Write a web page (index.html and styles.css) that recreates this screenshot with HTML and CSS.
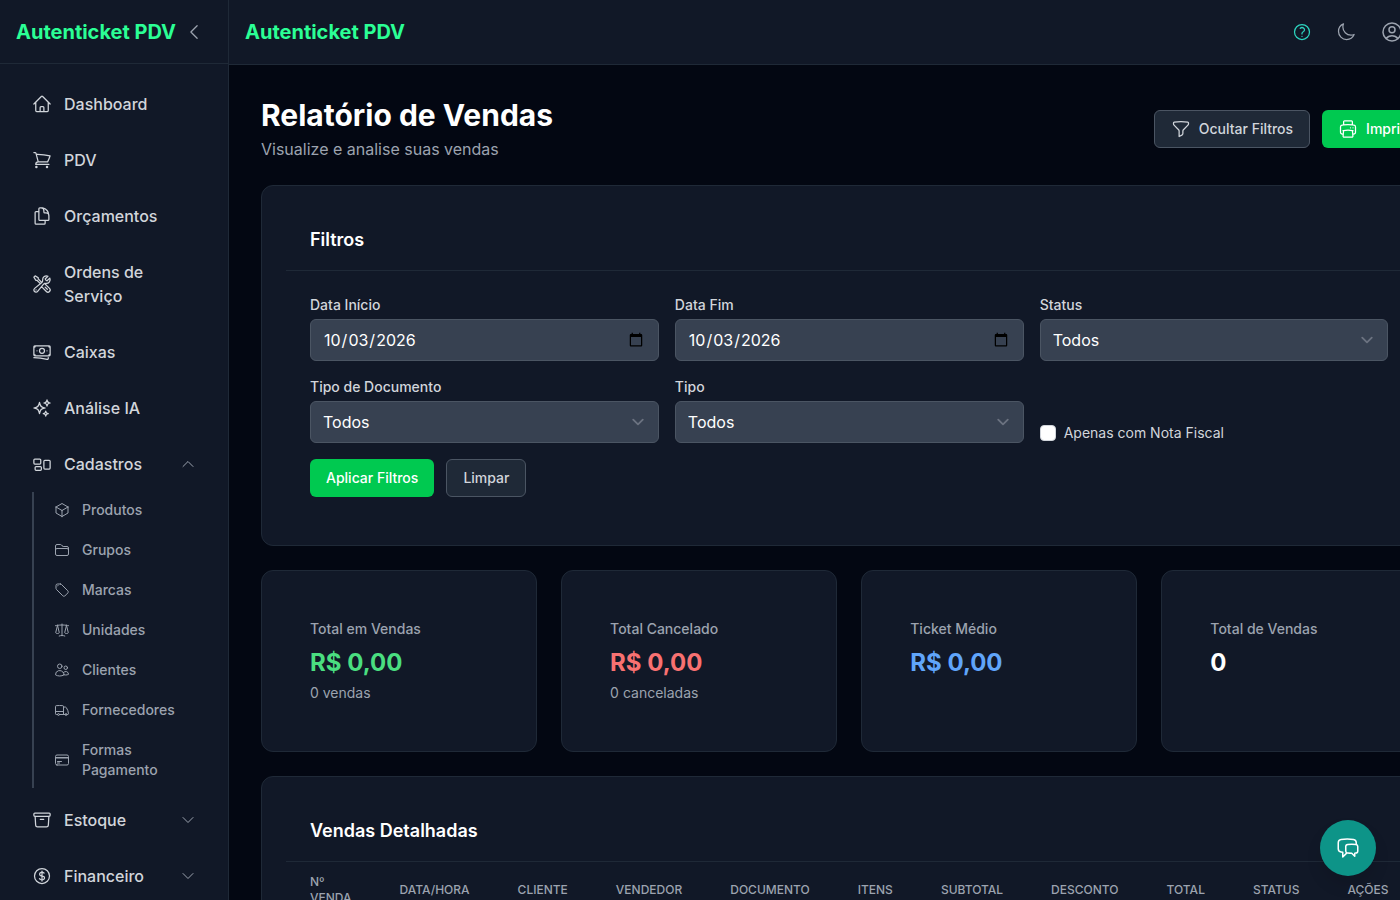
FILE: index.html
```
<!DOCTYPE html>
<html lang="pt-BR">
<head>
    <meta charset="UTF-8">
    <meta name="viewport" content="width=device-width, initial-scale=1.0">
    <title>Relatório de Vendas - Autenticket PDV</title>
    <link rel="stylesheet" href="styles.css">
</head>
<body>
    <!-- Icons -->
    <svg class="sprite" aria-hidden="true">
        <symbol id="chevron-left" viewBox="0 0 24 24"><path d="M15.75 19.5 8.25 12l7.5-7.5"/></symbol>
        <symbol id="chevron-up" viewBox="0 0 24 24"><path d="m4.5 15.75 7.5-7.5 7.5 7.5"/></symbol>
        <symbol id="chevron-down" viewBox="0 0 24 24"><path d="m19.5 8.25-7.5 7.5-7.5-7.5"/></symbol>
        <symbol id="home" viewBox="0 0 24 24"><path d="m2.25 12 8.954-8.955c.44-.439 1.152-.439 1.591 0L21.75 12M4.5 9.75v10.125c0 .621.504 1.125 1.125 1.125H9.75v-4.875c0-.621.504-1.125 1.125-1.125h2.25c.621 0 1.125.504 1.125 1.125V21h4.125c.621 0 1.125-.504 1.125-1.125V9.75M8.25 21h8.25"/></symbol>
        <symbol id="cart" viewBox="0 0 24 24"><path d="M2.25 3h1.386c.51 0 .955.343 1.087.835l.383 1.437M7.5 14.25a3 3 0 0 0-3 3h15.75m-12.75-3h11.218c1.121-2.3 2.1-4.684 2.924-7.138a60.114 60.114 0 0 0-16.536-1.84M7.5 14.25 5.106 5.272M6 20.25a.75.75 0 1 1-1.5 0 .75.75 0 0 1 1.5 0Zm12.75 0a.75.75 0 1 1-1.5 0 .75.75 0 0 1 1.5 0Z"/></symbol>
        <symbol id="documents" viewBox="0 0 24 24"><path d="M15.75 17.25v3.375c0 .621-.504 1.125-1.125 1.125h-9.75a1.125 1.125 0 0 1-1.125-1.125V7.875c0-.621.504-1.125 1.125-1.125H6.75a9.06 9.06 0 0 1 1.5.124m7.5 10.376h3.375c.621 0 1.125-.504 1.125-1.125V11.25c0-4.46-3.243-8.161-7.5-8.876a9.06 9.06 0 0 0-1.5-.124H9.375c-.621 0-1.125.504-1.125 1.125v3.5m7.5 10.375H9.375a1.125 1.125 0 0 1-1.125-1.125v-9.25m12 6.625v-1.875a3.375 3.375 0 0 0-3.375-3.375h-1.5a1.125 1.125 0 0 1-1.125-1.125v-1.5a3.375 3.375 0 0 0-3.375-3.375H9.75"/></symbol>
        <symbol id="tools" viewBox="0 0 24 24"><path d="M11.42 15.17 17.25 21A2.652 2.652 0 0 0 21 17.25l-5.877-5.877M11.42 15.17l2.496-3.03c.317-.384.74-.626 1.208-.766M11.42 15.17l-4.655 5.653a2.548 2.548 0 1 1-3.586-3.586l6.837-5.63m5.108-.233c.55-.164 1.163-.188 1.743-.14a4.5 4.5 0 0 0 4.486-6.336l-3.276 3.277a3.004 3.004 0 0 1-2.25-2.25l3.276-3.276a4.5 4.5 0 0 0-6.336 4.486c.091 1.076-.071 2.264-.904 2.95l-.102.085m-1.745 1.437L5.909 7.5H4.5L2.25 3.75l1.5-1.5L7.5 4.5v1.409l4.26 4.26m-1.745 1.437 1.745-1.437m6.615 8.206L15.75 15.75M4.867 19.125h.008v.008h-.008v-.008Z"/></symbol>
        <symbol id="banknotes" viewBox="0 0 24 24"><path d="M2.25 18.75a60.07 60.07 0 0 1 15.797 2.101c.727.198 1.453-.342 1.453-1.096V18.75M3.75 4.5v.75A.75.75 0 0 1 3 6h-.75m0 0v-.375c0-.621.504-1.125 1.125-1.125H20.25M2.25 6v9m18-10.5v.75c0 .414.336.75.75.75h.75m-1.5-1.5h.375c.621 0 1.125.504 1.125 1.125v9.75c0 .621-.504 1.125-1.125 1.125h-.375m1.5-1.5H21a.75.75 0 0 0-.75.75v.75m0 0H3.75m0 0h-.375a1.125 1.125 0 0 1-1.125-1.125V15m1.5 1.5v-.75A.75.75 0 0 0 3 15h-.75M15 10.5a3 3 0 1 1-6 0 3 3 0 0 1 6 0Zm3 0h.008v.008H18V10.5Zm-12 0h.008v.008H6V10.5Z"/></symbol>
        <symbol id="sparkles" viewBox="0 0 24 24"><path d="M9.813 15.904 9 18.75l-.813-2.846a4.5 4.5 0 0 0-3.09-3.09L2.25 12l2.846-.813a4.5 4.5 0 0 0 3.09-3.09L9 5.25l.813 2.846a4.5 4.5 0 0 0 3.09 3.09L15.75 12l-2.846.813a4.5 4.5 0 0 0-3.09 3.09ZM18.259 8.715 18 9.75l-.259-1.035a3.375 3.375 0 0 0-2.455-2.456L14.25 6l1.036-.259a3.375 3.375 0 0 0 2.455-2.456L18 2.25l.259 1.035a3.375 3.375 0 0 0 2.456 2.456L21.75 6l-1.035.259a3.375 3.375 0 0 0-2.456 2.456ZM16.894 20.567 16.5 21.75l-.394-1.183a2.25 2.25 0 0 0-1.423-1.423L13.5 18.75l1.183-.394a2.25 2.25 0 0 0 1.423-1.423l.394-1.183.394 1.183a2.25 2.25 0 0 0 1.423 1.423l1.183.394-1.183.394a2.25 2.25 0 0 0-1.423 1.423Z"/></symbol>
        <symbol id="group" viewBox="0 0 24 24"><path d="M2.25 7.125C2.25 6.504 2.754 6 3.375 6h6c.621 0 1.125.504 1.125 1.125v3.75c0 .621-.504 1.125-1.125 1.125h-6a1.125 1.125 0 0 1-1.125-1.125v-3.75ZM14.25 8.625c0-.621.504-1.125 1.125-1.125h5.25c.621 0 1.125.504 1.125 1.125v8.25c0 .621-.504 1.125-1.125 1.125h-5.25a1.125 1.125 0 0 1-1.125-1.125v-8.25ZM3.75 16.125c0-.621.504-1.125 1.125-1.125h5.25c.621 0 1.125.504 1.125 1.125v2.25c0 .621-.504 1.125-1.125 1.125h-5.25a1.125 1.125 0 0 1-1.125-1.125v-2.25Z"/></symbol>
        <symbol id="cube" viewBox="0 0 24 24"><path d="m21 7.5-9-5.25L3 7.5m18 0-9 5.25m9-5.25v9l-9 5.25M3 7.5l9 5.25M3 7.5v9l9 5.25m0-9v9"/></symbol>
        <symbol id="folder" viewBox="0 0 24 24"><path d="M2.25 12.75V12A2.25 2.25 0 0 1 4.5 9.75h15A2.25 2.25 0 0 1 21.75 12v.75m-8.69-6.44-2.12-2.12a1.5 1.5 0 0 0-1.061-.44H4.5A2.25 2.25 0 0 0 2.25 6v12a2.25 2.25 0 0 0 2.25 2.25h15A2.25 2.25 0 0 0 21.75 18V9a2.25 2.25 0 0 0-2.25-2.25h-5.379a1.5 1.5 0 0 1-1.06-.44Z"/></symbol>
        <symbol id="tag" viewBox="0 0 24 24"><path d="M9.568 3H5.25A2.25 2.25 0 0 0 3 5.25v4.318c0 .597.237 1.17.659 1.591l9.581 9.581c.699.699 1.78.872 2.607.33a18.095 18.095 0 0 0 5.223-5.223c.542-.827.369-1.908-.33-2.607L11.16 3.66A2.25 2.25 0 0 0 9.568 3Z"/><path d="M6 6h.008v.008H6V6Z"/></symbol>
        <symbol id="scale" viewBox="0 0 24 24"><path d="M12 3v17.25m0 0c-1.472 0-2.882.265-4.185.75M12 20.25c1.472 0 2.882.265 4.185.75M18.75 4.97A48.416 48.416 0 0 0 12 4.5c-2.291 0-4.545.16-6.75.47m13.5 0c1.01.143 2.01.317 3 .52m-3-.52 2.62 10.726c.122.499-.106 1.028-.589 1.202a5.988 5.988 0 0 1-2.031.352 5.988 5.988 0 0 1-2.031-.352c-.483-.174-.711-.703-.59-1.202L18.75 4.971Zm-16.5.52c.99-.203 1.99-.377 3-.52m0 0 2.62 10.726c.122.499-.106 1.028-.589 1.202a5.989 5.989 0 0 1-2.031.352 5.989 5.989 0 0 1-2.031-.352c-.483-.174-.711-.703-.59-1.202L5.25 4.971Z"/></symbol>
        <symbol id="users" viewBox="0 0 24 24"><path d="M15 19.128a9.38 9.38 0 0 0 2.625.372 9.337 9.337 0 0 0 4.121-.952 4.125 4.125 0 0 0-7.533-2.493M15 19.128v-.003c0-1.113-.285-2.16-.786-3.07M15 19.128v.106A12.318 12.318 0 0 1 8.624 21c-2.331 0-4.512-.645-6.374-1.766l-.001-.109a6.375 6.375 0 0 1 11.964-3.07M12 6.375a3.375 3.375 0 1 1-6.75 0 3.375 3.375 0 0 1 6.75 0Zm8.25 2.25a2.625 2.625 0 1 1-5.25 0 2.625 2.625 0 0 1 5.25 0Z"/></symbol>
        <symbol id="truck" viewBox="0 0 24 24"><path d="M8.25 18.75a1.5 1.5 0 0 1-3 0m3 0a1.5 1.5 0 0 0-3 0m3 0h6m-9 0H3.375a1.125 1.125 0 0 1-1.125-1.125V14.25m17.25 4.5a1.5 1.5 0 0 1-3 0m3 0a1.5 1.5 0 0 0-3 0m3 0h1.125c.621 0 1.129-.504 1.09-1.124a17.902 17.902 0 0 0-3.213-9.193 2.056 2.056 0 0 0-1.58-.86H14.25M16.5 18.75h-2.25m0-11.177v-.958c0-.568-.422-1.048-.987-1.106a48.554 48.554 0 0 0-10.026 0 1.106 1.106 0 0 0-.987 1.106v7.635m12-6.677v6.677m0 4.5v-4.5m0 0h-12"/></symbol>
        <symbol id="card" viewBox="0 0 24 24"><path d="M2.25 8.25h19.5M2.25 9h19.5m-16.5 5.25h6m-6 2.25h3m-3.75 3h15a2.25 2.25 0 0 0 2.25-2.25V6.75A2.25 2.25 0 0 0 19.5 4.5h-15a2.25 2.25 0 0 0-2.25 2.25v10.5A2.25 2.25 0 0 0 4.5 19.5Z"/></symbol>
        <symbol id="archive" viewBox="0 0 24 24"><path d="m20.25 7.5-.625 10.632a2.25 2.25 0 0 1-2.247 2.118H6.622a2.25 2.25 0 0 1-2.247-2.118L3.75 7.5M10 11.25h4M3.375 7.5h17.25c.621 0 1.125-.504 1.125-1.125v-1.5c0-.621-.504-1.125-1.125-1.125H3.375c-.621 0-1.125.504-1.125 1.125v1.5c0 .621.504 1.125 1.125 1.125Z"/></symbol>
        <symbol id="dollar" viewBox="0 0 24 24"><path d="M12 6v12m-3-2.818.879.659c1.171.879 3.07.879 4.242 0 1.172-.879 1.172-2.303 0-3.182C13.536 12.219 12.768 12 12 12c-.725 0-1.45-.22-2.003-.659-1.106-.879-1.106-2.303 0-3.182s2.9-.879 4.006 0l.415.33M21 12a9 9 0 1 1-18 0 9 9 0 0 1 18 0Z"/></symbol>
        <symbol id="question" viewBox="0 0 24 24"><path d="M9.879 7.519c1.171-1.025 3.071-1.025 4.242 0 1.172 1.025 1.172 2.687 0 3.712-.203.179-.43.326-.67.442-.745.361-1.45.999-1.45 1.827v.75M21 12a9 9 0 1 1-18 0 9 9 0 0 1 18 0Zm-9 5.25h.008v.008H12v-.008Z"/></symbol>
        <symbol id="moon" viewBox="0 0 24 24"><path d="M21.752 15.002A9.72 9.72 0 0 1 18 15.75c-5.385 0-9.75-4.365-9.75-9.75 0-1.33.266-2.597.748-3.752A9.753 9.753 0 0 0 3 11.25C3 16.635 7.365 21 12.75 21a9.753 9.753 0 0 0 9.002-5.998Z"/></symbol>
        <symbol id="user" viewBox="0 0 24 24"><path d="M17.982 18.725A7.488 7.488 0 0 0 12 15.75a7.488 7.488 0 0 0-5.982 2.975m11.963 0a9 9 0 1 0-11.963 0m11.963 0A8.966 8.966 0 0 1 12 21a8.966 8.966 0 0 1-5.982-2.275M15 9.75a3 3 0 1 1-6 0 3 3 0 0 1 6 0Z"/></symbol>
        <symbol id="funnel" viewBox="0 0 24 24"><path d="M12 3c2.755 0 5.455.232 8.083.678.533.09.917.556.917 1.096v1.044a2.25 2.25 0 0 1-.659 1.591l-5.432 5.432a2.25 2.25 0 0 0-.659 1.591v2.927a2.25 2.25 0 0 1-1.244 2.013L9.75 21v-6.568a2.25 2.25 0 0 0-.659-1.591L3.659 7.409A2.25 2.25 0 0 1 3 5.818V4.774c0-.54.384-1.006.917-1.096A48.32 48.32 0 0 1 12 3Z"/></symbol>
        <symbol id="printer" viewBox="0 0 24 24"><path d="M6.72 13.829c-.24.03-.48.062-.72.096m.72-.096a42.415 42.415 0 0 1 10.56 0m-10.56 0L6.34 18m10.94-4.171c.24.03.48.062.72.096m-.72-.096L17.66 18m0 0 .229 2.523a1.125 1.125 0 0 1-1.12 1.227H7.231c-.662 0-1.18-.568-1.12-1.227L6.34 18m11.318 0h1.091A2.25 2.25 0 0 0 21 15.75V9.456c0-1.081-.768-2.015-1.837-2.175a48.055 48.055 0 0 0-1.913-.247M6.34 18H5.25A2.25 2.25 0 0 1 3 15.75V9.456c0-1.081.768-2.015 1.837-2.175a48.041 48.041 0 0 1 1.913-.247m10.5 0a48.536 48.536 0 0 0-10.5 0m10.5 0V3.375c0-.621-.504-1.125-1.125-1.125h-8.25c-.621 0-1.125.504-1.125 1.125v3.659M18 10.5h.008v.008H18V10.5Zm-3 0h.008v.008H15V10.5Z"/></symbol>
        <symbol id="chat" viewBox="0 0 24 24"><path d="M20.25 8.511c.884.284 1.5 1.128 1.5 2.097v4.286c0 1.136-.847 2.1-1.98 2.193-.34.027-.68.052-1.02.072v3.091l-3-3c-1.354 0-2.694-.055-4.02-.163a2.115 2.115 0 0 1-.825-.242m9.345-8.334a2.126 2.126 0 0 0-.476-.095 48.64 48.64 0 0 0-8.048 0c-1.131.094-1.976 1.057-1.976 2.192v4.286c0 .837.46 1.58 1.155 1.951m9.345-8.334V6.637c0-1.621-1.152-3.026-2.76-3.235A48.455 48.455 0 0 0 11.25 3c-2.115 0-4.198.137-6.24.402-1.608.209-2.76 1.614-2.76 3.235v6.226c0 1.621 1.152 3.026 2.76 3.235.577.075 1.157.14 1.74.194V21l4.155-4.155"/></symbol>
    </svg>

    <div class="app">
        <aside class="sidebar">
            <div class="sidebar-header">
                <span class="brand">Autenticket PDV</span>
                <button class="icon-btn" aria-label="Recolher menu"><svg class="icon"><use href="#chevron-left"/></svg></button>
            </div>
            <nav class="nav">
                <a class="nav-item" href="#"><svg class="icon"><use href="#home"/></svg><span>Dashboard</span></a>
                <a class="nav-item" href="#"><svg class="icon"><use href="#cart"/></svg><span>PDV</span></a>
                <a class="nav-item" href="#"><svg class="icon"><use href="#documents"/></svg><span>Orçamentos</span></a>
                <a class="nav-item" href="#"><svg class="icon"><use href="#tools"/></svg><span>Ordens de Serviço</span></a>
                <a class="nav-item" href="#"><svg class="icon"><use href="#banknotes"/></svg><span>Caixas</span></a>
                <a class="nav-item" href="#"><svg class="icon"><use href="#sparkles"/></svg><span>Análise IA</span></a>
                <div>
                    <button class="nav-item" aria-expanded="true"><svg class="icon"><use href="#group"/></svg><span>Cadastros</span><svg class="icon-sm arrow"><use href="#chevron-up"/></svg></button>
                    <div class="subnav">
                        <a class="subnav-item" href="#"><svg class="icon-sm"><use href="#cube"/></svg><span>Produtos</span></a>
                        <a class="subnav-item" href="#"><svg class="icon-sm"><use href="#folder"/></svg><span>Grupos</span></a>
                        <a class="subnav-item" href="#"><svg class="icon-sm"><use href="#tag"/></svg><span>Marcas</span></a>
                        <a class="subnav-item" href="#"><svg class="icon-sm"><use href="#scale"/></svg><span>Unidades</span></a>
                        <a class="subnav-item" href="#"><svg class="icon-sm"><use href="#users"/></svg><span>Clientes</span></a>
                        <a class="subnav-item" href="#"><svg class="icon-sm"><use href="#truck"/></svg><span>Fornecedores</span></a>
                        <a class="subnav-item" href="#"><svg class="icon-sm"><use href="#card"/></svg><span>Formas Pagamento</span></a>
                    </div>
                </div>
                <button class="nav-item" aria-expanded="false"><svg class="icon"><use href="#archive"/></svg><span>Estoque</span><svg class="icon-sm arrow"><use href="#chevron-down"/></svg></button>
                <button class="nav-item" aria-expanded="false"><svg class="icon"><use href="#dollar"/></svg><span>Financeiro</span><svg class="icon-sm arrow"><use href="#chevron-down"/></svg></button>
            </nav>
        </aside>

        <div class="page">
            <header class="topbar">
                <span class="brand">Autenticket PDV</span>
                <div class="topbar-actions">
                    <button class="icon-btn help" aria-label="Ajuda"><svg class="icon"><use href="#question"/></svg></button>
                    <button class="icon-btn" aria-label="Alternar tema"><svg class="icon"><use href="#moon"/></svg></button>
                    <button class="icon-btn account" aria-label="Minha conta"><svg class="icon-lg"><use href="#user"/></svg><svg class="icon-sm"><use href="#chevron-down"/></svg></button>
                </div>
            </header>

            <main class="content">
                <div class="page-header">
                    <div>
                        <h1>Relatório de Vendas</h1>
                        <p>Visualize e analise suas vendas</p>
                    </div>
                    <div class="actions">
                        <button class="btn btn-secondary"><svg class="icon"><use href="#funnel"/></svg>Ocultar Filtros</button>
                        <button class="btn btn-primary"><svg class="icon"><use href="#printer"/></svg>Imprimir</button>
                    </div>
                </div>

                <section class="card">
                    <h2 class="card-title">Filtros</h2>
                    <form class="card-body">
                        <div class="filters">
                            <div class="field">
                                <label for="dataInicio">Data Início</label>
                                <input type="date" id="dataInicio" value="2026-10-03">
                            </div>
                            <div class="field">
                                <label for="dataFim">Data Fim</label>
                                <input type="date" id="dataFim" value="2026-10-03">
                            </div>
                            <div class="field">
                                <label for="status">Status</label>
                                <select id="status"><option>Todos</option></select>
                            </div>
                            <div class="field">
                                <label for="tipoDocumento">Tipo de Documento</label>
                                <select id="tipoDocumento"><option>Todos</option></select>
                            </div>
                            <div class="field">
                                <label for="tipo">Tipo</label>
                                <select id="tipo"><option>Todos</option></select>
                            </div>
                            <div class="check">
                                <input type="checkbox" id="notaFiscal">
                                <label for="notaFiscal">Apenas com Nota Fiscal</label>
                            </div>
                        </div>
                        <div class="actions">
                            <button type="button" class="btn btn-primary">Aplicar Filtros</button>
                            <button type="reset" class="btn btn-secondary">Limpar</button>
                        </div>
                    </form>
                </section>

                <div class="stats">
                    <div class="card stat">
                        <p class="stat-label">Total em Vendas</p>
                        <p class="stat-value green">R$ 0,00</p>
                        <p class="stat-note">0 vendas</p>
                    </div>
                    <div class="card stat">
                        <p class="stat-label">Total Cancelado</p>
                        <p class="stat-value red">R$ 0,00</p>
                        <p class="stat-note">0 canceladas</p>
                    </div>
                    <div class="card stat">
                        <p class="stat-label">Ticket Médio</p>
                        <p class="stat-value blue">R$ 0,00</p>
                    </div>
                    <div class="card stat">
                        <p class="stat-label">Total de Vendas</p>
                        <p class="stat-value">0</p>
                    </div>
                </div>

                <section class="card">
                    <h2 class="card-title">Vendas Detalhadas</h2>
                    <table>
                        <thead>
                            <tr>
                                <th>Nº Venda</th>
                                <th>Data/Hora</th>
                                <th>Cliente</th>
                                <th>Vendedor</th>
                                <th>Documento</th>
                                <th>Itens</th>
                                <th>Subtotal</th>
                                <th>Desconto</th>
                                <th>Total</th>
                                <th>Status</th>
                                <th>Ações</th>
                            </tr>
                        </thead>
                    </table>
                </section>
            </main>
        </div>
    </div>

    <button class="chat-btn" aria-label="Abrir chat"><svg class="icon-lg"><use href="#chat"/></svg></button>
</body>
</html>
```
FILE: styles.css
```
* {
    box-sizing: border-box;
    margin: 0;
    padding: 0;
}
body {
    font-family: Inter, sans-serif;
    font-size: 16px;
    line-height: 24px;
    color: #fff;
    background-color: #030712;
    overflow: hidden;
}
button, input, select {
    font: inherit;
    color: inherit;
}
button {
    background: none;
    border: none;
    cursor: pointer;
}
a {
    color: inherit;
    text-decoration: none;
}

/* Icons */
.sprite {
    display: none;
}
.icon, .icon-sm, .icon-lg {
    flex-shrink: 0;
    width: 20px;
    height: 20px;
    fill: none;
    stroke: currentColor;
    stroke-width: 1.5;
    stroke-linecap: round;
    stroke-linejoin: round;
}
.icon-sm {
    width: 16px;
    height: 16px;
}
.icon-lg {
    width: 24px;
    height: 24px;
}
.icon-btn {
    display: flex;
    align-items: center;
    gap: 8px;
    padding: 8px;
    color: #9ca3af;
}

.app {
    display: flex;
    height: 100vh;
}
.brand {
    font-size: 20px;
    line-height: 28px;
    font-weight: 700;
    color: #2bff95;
    white-space: nowrap;
}

/* Sidebar */
.sidebar {
    flex: none;
    width: 229px;
    height: 100vh;
    overflow: hidden;
    background-color: #111827;
    border-right: 1px solid #1f2937;
}
.sidebar-header {
    display: flex;
    align-items: center;
    justify-content: space-between;
    height: 64px;
    padding: 0 16px;
    border-bottom: 1px solid #1f2937;
}
.nav {
    display: flex;
    flex-direction: column;
    gap: 8px;
    padding: 16px;
}
.nav-item {
    display: flex;
    align-items: center;
    gap: 12px;
    width: 100%;
    padding: 12px 16px;
    font-weight: 500;
    text-align: left;
    color: #d1d5db;
}
.arrow {
    margin-left: auto;
    color: #9ca3af;
}
.subnav {
    display: flex;
    flex-direction: column;
    gap: 4px;
    margin: 4px 0 0 16px;
    padding-left: 8px;
    border-left: 2px solid #374151;
}
.subnav-item {
    display: flex;
    align-items: center;
    gap: 12px;
    padding: 8px 12px;
    font-size: 14px;
    line-height: 20px;
    font-weight: 500;
    color: #9ca3af;
}

/* Top bar */
.page {
    flex: 1 0 auto;
    width: min-content;
}
.topbar {
    display: flex;
    align-items: center;
    justify-content: space-between;
    height: 65px;
    padding: 0 16px;
    background-color: #111827;
    border-bottom: 1px solid #1f2937;
}
.topbar-actions {
    display: flex;
    align-items: center;
    gap: 8px;
}
.help {
    color: #2dd4bf;
}
.account {
    min-width: 81px;
}

/* Content */
.content {
    display: flex;
    flex-direction: column;
    gap: 24px;
    padding: 32px;
}
.page-header {
    display: flex;
    align-items: center;
    justify-content: space-between;
}
h1 {
    font-size: 30px;
    line-height: 36px;
    font-weight: 700;
}
.page-header p {
    margin-top: 4px;
    color: #9ca3af;
}
.actions {
    display: flex;
    gap: 12px;
}
.btn {
    display: flex;
    align-items: center;
    gap: 8px;
    height: 38px;
    padding: 0 16px;
    font-size: 14px;
    line-height: 20px;
    font-weight: 500;
    border-radius: 6px;
    white-space: nowrap;
}
.btn-primary {
    background-color: #00c950;
}
.btn-secondary {
    color: #d1d5db;
    background-color: #1f2937;
    border: 1px solid #4b5563;
}

.card {
    padding: 24px;
    background-color: #111827;
    border: 1px solid #1f2937;
    border-radius: 12px;
}
.card-title {
    padding: 16px 24px;
    font-size: 18px;
    line-height: 28px;
    font-weight: 600;
    border-bottom: 1px solid #1f2937;
}
.card-body {
    display: flex;
    flex-direction: column;
    gap: 16px;
    padding: 24px;
}

/* Filters */
.filters {
    display: grid;
    grid-template-columns: repeat(3, 1fr);
    gap: 16px;
}
.field {
    display: flex;
    flex-direction: column;
    gap: 4px;
}
label {
    font-size: 14px;
    line-height: 20px;
    font-weight: 500;
    color: #d1d5db;
}
input[type="date"], select {
    width: 100%;
    height: 42px;
    padding: 8px 12px;
    background-color: #374151;
    border: 1px solid #4b5563;
    border-radius: 6px;
}
select {
    appearance: none;
    background-image: url("data:image/svg+xml,%3Csvg xmlns='http://www.w3.org/2000/svg' fill='none' viewBox='0 0 20 20'%3E%3Cpath stroke='%236b7280' stroke-linecap='round' stroke-linejoin='round' stroke-width='1.5' d='M6 8l4 4 4-4'/%3E%3C/svg%3E");
    background-repeat: no-repeat;
    background-position: right 8px center;
    background-size: 24px 24px;
}
.check {
    display: flex;
    align-items: center;
    align-self: end;
    gap: 8px;
}
.check label {
    font-weight: 400;
}
.check input {
    appearance: none;
    width: 16px;
    height: 16px;
    background-color: #fff;
    border: 1px solid #d1d5db;
    border-radius: 4px;
}
.check input:checked {
    background-color: #00c950;
}

/* Totals */
.stats {
    display: grid;
    grid-template-columns: repeat(4, 1fr);
    gap: 24px;
}
.stat {
    padding: 48px;
}
.stat-label, .stat-note {
    font-size: 14px;
    line-height: 20px;
    color: #9ca3af;
}
.stat-label {
    font-weight: 500;
}
.stat-value {
    margin: 8px 0 4px;
    font-size: 24px;
    line-height: 32px;
    font-weight: 700;
}
.green {
    color: #4ade80;
}
.red {
    color: #f87171;
}
.blue {
    color: #60a5fa;
}

/* Sales table */
table {
    width: 100%;
    border-collapse: collapse;
}
th {
    padding: 12px 24px;
    font-size: 12px;
    line-height: 16px;
    font-weight: 500;
    text-align: left;
    text-transform: uppercase;
    color: #9ca3af;
}

.chat-btn {
    position: fixed;
    right: 24px;
    bottom: 24px;
    display: flex;
    align-items: center;
    justify-content: center;
    width: 56px;
    height: 56px;
    background-color: #0d9488;
    border-radius: 50%;
    box-shadow: 0 10px 15px rgba(0, 0, 0, 0.1);
}
```
